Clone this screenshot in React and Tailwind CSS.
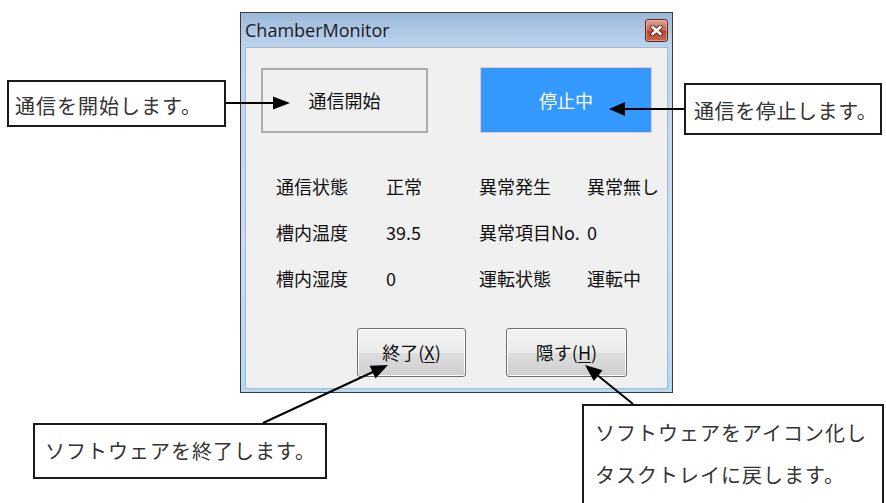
const uiFont = { fontFamily: '"Noto Sans CJK JP", "Noto Sans", sans-serif' };

const CloseButton = () => (
  <div className="w-[23px] h-[23px] rounded-[3px] border border-[#5e2a24] bg-[linear-gradient(to_bottom,#e0a090_0%,#cc6c58_45%,#b8432e_55%,#c86652_100%)] flex items-center justify-center shadow-[inset_0_0_0_1px_rgba(255,210,200,0.45)]">
    <svg width="13" height="11" viewBox="0 0 13 11">
      <path d="M2.5 2 L10.5 9 M10.5 2 L2.5 9" stroke="#5b2a22" strokeWidth="4.5" strokeLinecap="round" />
      <path d="M2.5 2 L10.5 9 M10.5 2 L2.5 9" stroke="#ffffff" strokeWidth="2.6" strokeLinecap="round" />
    </svg>
  </div>
);

const WinButton = ({ label, mnemonic, className }) => (
  <div
    className={`h-[49px] rounded-[3px] border border-[#707070] bg-[linear-gradient(to_bottom,#f2f2f2_0%,#ebebeb_50%,#dddddd_50%,#cfcfcf_100%)] shadow-[inset_0_0_0_1px_#fcfcfc] flex items-center justify-center text-[18px] text-[#111] ${className}`}
  >
    {label}(<span className="underline underline-offset-2">{mnemonic}</span>)
  </div>
);

const rows = [
  ['通信状態', '正常', '異常発生', '異常無し'],
  ['槽内温度', '39.5', '異常項目No.', '0'],
  ['槽内湿度', '0', '運転状態', '運転中'],
];

const ChamberWindow = () => (
  <div className="w-[433px] h-[381px] border border-[#3b3b3b] bg-[linear-gradient(to_bottom,#9cb9db_0px,#bdd4ed_34px,#c9dcf1_60%,#b3daf2_100%)] px-[4px] pb-[3px] flex flex-col">
    <div className="h-[34px] flex items-center justify-between">
      <span className="text-[18px] text-[#1b1b1b] leading-none" style={{ fontFamily: '"Open Sans", "Noto Sans", sans-serif' }}>
        ChamberMonitor
      </span>
      <CloseButton />
    </div>
    <div className="flex-1 border border-[#a3b9d4] bg-[#f0f0f0] pt-[20px] pl-[15px]" style={uiFont}>
      <div className="flex items-start">
        <div className="w-[167px] h-[65px] border-2 border-[#ababab] flex items-center justify-center text-[18px] text-[#111]">
          通信開始
        </div>
        <div className="ml-[52px] -mt-[1px] w-[172px] h-[66px] border border-[#f2c4c9] bg-[#3399ff] flex items-center justify-center text-[18px] text-white">
          停止中
        </div>
      </div>
      <div className="mt-[30px] ml-[15px] grid grid-cols-[110px_93px_108px_auto] auto-rows-[46px] items-center text-[18px] text-[#111] whitespace-nowrap">
        {rows.map((r) => r.map((c, i) => <span key={r[0] + i}>{c}</span>))}
      </div>
      <div className="mt-[27px] flex">
        <WinButton label="終了" mnemonic="X" className="ml-[96px] w-[109px]" />
        <WinButton label="隠す" mnemonic="H" className="ml-[40px] w-[121px]" />
      </div>
    </div>
  </div>
);

const calloutFont = { fontFamily: '"Noto Sans CJK JP", sans-serif' };

export default function App() {
  return (
    <div className="relative w-[886px] h-[503px] overflow-hidden bg-white">
      <div className="pt-[12px] pl-[240px]">
        <ChamberWindow />
      </div>

      <div className="absolute left-[7px] top-[80px] w-[219px] h-[47px] border-2 border-[#1a1a1a] bg-white flex items-center pl-[6px] pt-[5px] text-[20px] tracking-[1px] text-[#333] whitespace-nowrap" style={calloutFont}>
        通信を開始します。
      </div>
      <div className="absolute left-[684px] top-[83px] w-[198px] h-[52px] border-2 border-[#1a1a1a] bg-white flex items-center pl-[8px] pt-[3px] text-[20px] tracking-[0.6px] text-[#333] whitespace-nowrap overflow-hidden" style={calloutFont}>
        通信を停止します。
      </div>
      <div className="absolute left-[33px] top-[423px] w-[294px] h-[56px] border-2 border-[#1a1a1a] bg-white flex items-center pl-[10px] text-[20px] tracking-[1px] text-[#333] whitespace-nowrap" style={calloutFont}>
        ソフトウェアを終了します。
      </div>
      <div className="absolute left-[582px] top-[404px] w-[302px] h-[112px] border-2 border-[#1a1a1a] bg-white pl-[11px] pt-[6px] text-[20px] leading-[42px] tracking-[1px] text-[#333] whitespace-nowrap" style={calloutFont}>
        <div>ソフトウェアをアイコン化し</div>
        <div>タスクトレイに戻します。</div>
      </div>

      <svg className="absolute inset-0 pointer-events-none" width="886" height="503">
        <line x1="226" y1="103" x2="275" y2="103" stroke="#000" strokeWidth="2" />
        <polygon points="273,96.5 290,103 273,109.5" fill="#000" />
        <line x1="684" y1="109" x2="623" y2="109" stroke="#000" strokeWidth="2" />
        <polygon points="625,102 609,109 625,116" fill="#000" />
        <line x1="263" y1="423" x2="375" y2="371" stroke="#000" strokeWidth="2" />
        <polygon points="388,365 375.5,378.6 369.7,365.8" fill="#000" />
        <line x1="633" y1="404" x2="596" y2="374" stroke="#000" strokeWidth="2" />
        <polygon points="585,365 602.6,370.3 593.8,381.1" fill="#000" />
      </svg>
    </div>
  );
}
